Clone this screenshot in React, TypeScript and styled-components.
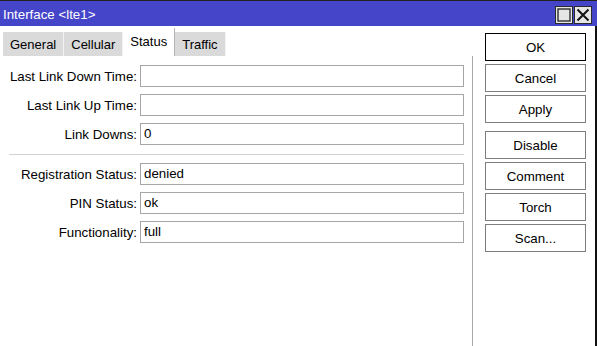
import styled, { createGlobalStyle } from 'styled-components'

const GlobalStyle = createGlobalStyle`
  html, body {
    margin: 0;
    padding: 0;
    background: #ffffff;
  }
  body {
    font-family: 'Liberation Sans', Arial, sans-serif;
    font-size: 13.3px;
    color: #000;
  }
`

type Field = { label: string; value: string }

const linkFields: Field[] = [
  { label: 'Last Link Down Time:', value: '' },
  { label: 'Last Link Up Time:', value: '' },
  { label: 'Link Downs:', value: '0' },
]

const statusFields: Field[] = [
  { label: 'Registration Status:', value: 'denied' },
  { label: 'PIN Status:', value: 'ok' },
  { label: 'Functionality:', value: 'full' },
]

const tabs = ['General', 'Cellular', 'Status', 'Traffic']

const MaximizeIcon = () => (
  <svg width='14' height='14' viewBox='0 0 14 14'>
    <rect x='1' y='1' width='12' height='12' fill='none' stroke='#222' strokeWidth='1.3' />
  </svg>
)

const CloseIcon = () => (
  <svg width='14' height='14' viewBox='0 0 14 14'>
    <path d='M1.5 1.5 L12.5 12.5 M12.5 1.5 L1.5 12.5' stroke='#111' strokeWidth='2' />
  </svg>
)

export default function App() {
  return (
    <>
      <GlobalStyle />
      <Window>
        <TitleBar>
          <Title>Interface &lt;lte1&gt;</Title>
          <TitleButtons>
            <TitleButton>
              <MaximizeIcon />
            </TitleButton>
            <TitleButton>
              <CloseIcon />
            </TitleButton>
          </TitleButtons>
        </TitleBar>
        <Body>
          <LeftPane>
            <TabBar>
              {tabs.map(t => (
                <Tab key={t} $active={t === 'Status'}>
                  {t}
                </Tab>
              ))}
            </TabBar>
            <Content>
              {linkFields.map(f => (
                <Row key={f.label}>
                  <Label>{f.label}</Label>
                  <Input>{f.value}</Input>
                </Row>
              ))}
              <Separator />
              {statusFields.map(f => (
                <Row key={f.label}>
                  <Label>{f.label}</Label>
                  <Input>{f.value}</Input>
                </Row>
              ))}
            </Content>
          </LeftPane>
          <ButtonColumn>
            <Button $primary>OK</Button>
            <Button>Cancel</Button>
            <Button>Apply</Button>
            <Button $spaced>Disable</Button>
            <Button>Comment</Button>
            <Button>Torch</Button>
            <Button>Scan...</Button>
          </ButtonColumn>
        </Body>
      </Window>
    </>
  )
}

const Window = styled.div`
  width: 597px;
  height: 346px;
  box-sizing: border-box;
  border-top: 1px solid #222;
  display: flex;
  flex-direction: column;
  background: #fff;
  overflow: hidden;
`

const TitleBar = styled.div`
  height: 25px;
  flex: none;
  background: #4545c9;
  display: flex;
  align-items: center;
  justify-content: space-between;
  padding: 0 5px 0 3px;
`

const Title = styled.div`
  color: #fff;
  padding-top: 1px;
`

const TitleButtons = styled.div`
  display: flex;
  gap: 1px;
  margin-top: 2px;
`

const TitleButton = styled.div`
  width: 18px;
  height: 18px;
  box-sizing: border-box;
  background: #e6e6e6;
  border: 1px solid #2a2a2a;
  display: flex;
  align-items: center;
  justify-content: center;
`

const Body = styled.div`
  flex: 1;
  display: flex;
  border-right: 2px solid #111;
`

const LeftPane = styled.div`
  width: 473px;
  display: flex;
  flex-direction: column;
`

const TabBar = styled.div`
  display: flex;
  align-items: flex-end;
  height: 28px;
  margin-top: 2px;
  padding-left: 3px;
`

const Tab = styled.div<{ $active?: boolean }>`
  height: ${p => (p.$active ? '28px' : '24px')};
  line-height: ${p => (p.$active ? '27px' : '25px')};
  padding: 0 7px;
  font-size: 13px;
  background: ${p => (p.$active ? '#fff' : '#dadada')};
  border-right: 1px solid ${p => (p.$active ? '#b4b4b4' : '#f2f2f2')};
  color: #000;
`

const Content = styled.div`
  flex: 1;
  border-right: 1px solid #a8a8a8;
  padding: 9px 8px 0 9px;
  display: flex;
  flex-direction: column;
  gap: 7px;
`

const Row = styled.div`
  display: grid;
  grid-template-columns: 128px 1fr;
  column-gap: 3px;
  align-items: center;
`

const Label = styled.div`
  text-align: right;
  white-space: nowrap;
`

const Input = styled.div`
  height: 22px;
  box-sizing: border-box;
  border: 1px solid #a6a6a6;
  padding: 0 3px;
  line-height: 20px;
  background: #fff;
`

const Separator = styled.div`
  height: 1px;
  background: #d2d2d2;
  margin: 2px 0 1px;
`

const ButtonColumn = styled.div`
  display: flex;
  flex-direction: column;
  gap: 3px;
  padding: 7px 0 0 12px;
`

const Button = styled.div<{ $primary?: boolean; $spaced?: boolean }>`
  width: 101px;
  height: 28px;
  box-sizing: border-box;
  border: 1px solid ${p => (p.$primary ? '#000' : '#7e7e7e')};
  margin-top: ${p => (p.$spaced ? '5px' : '0')};
  display: flex;
  align-items: center;
  justify-content: center;
  background: #fff;
`
